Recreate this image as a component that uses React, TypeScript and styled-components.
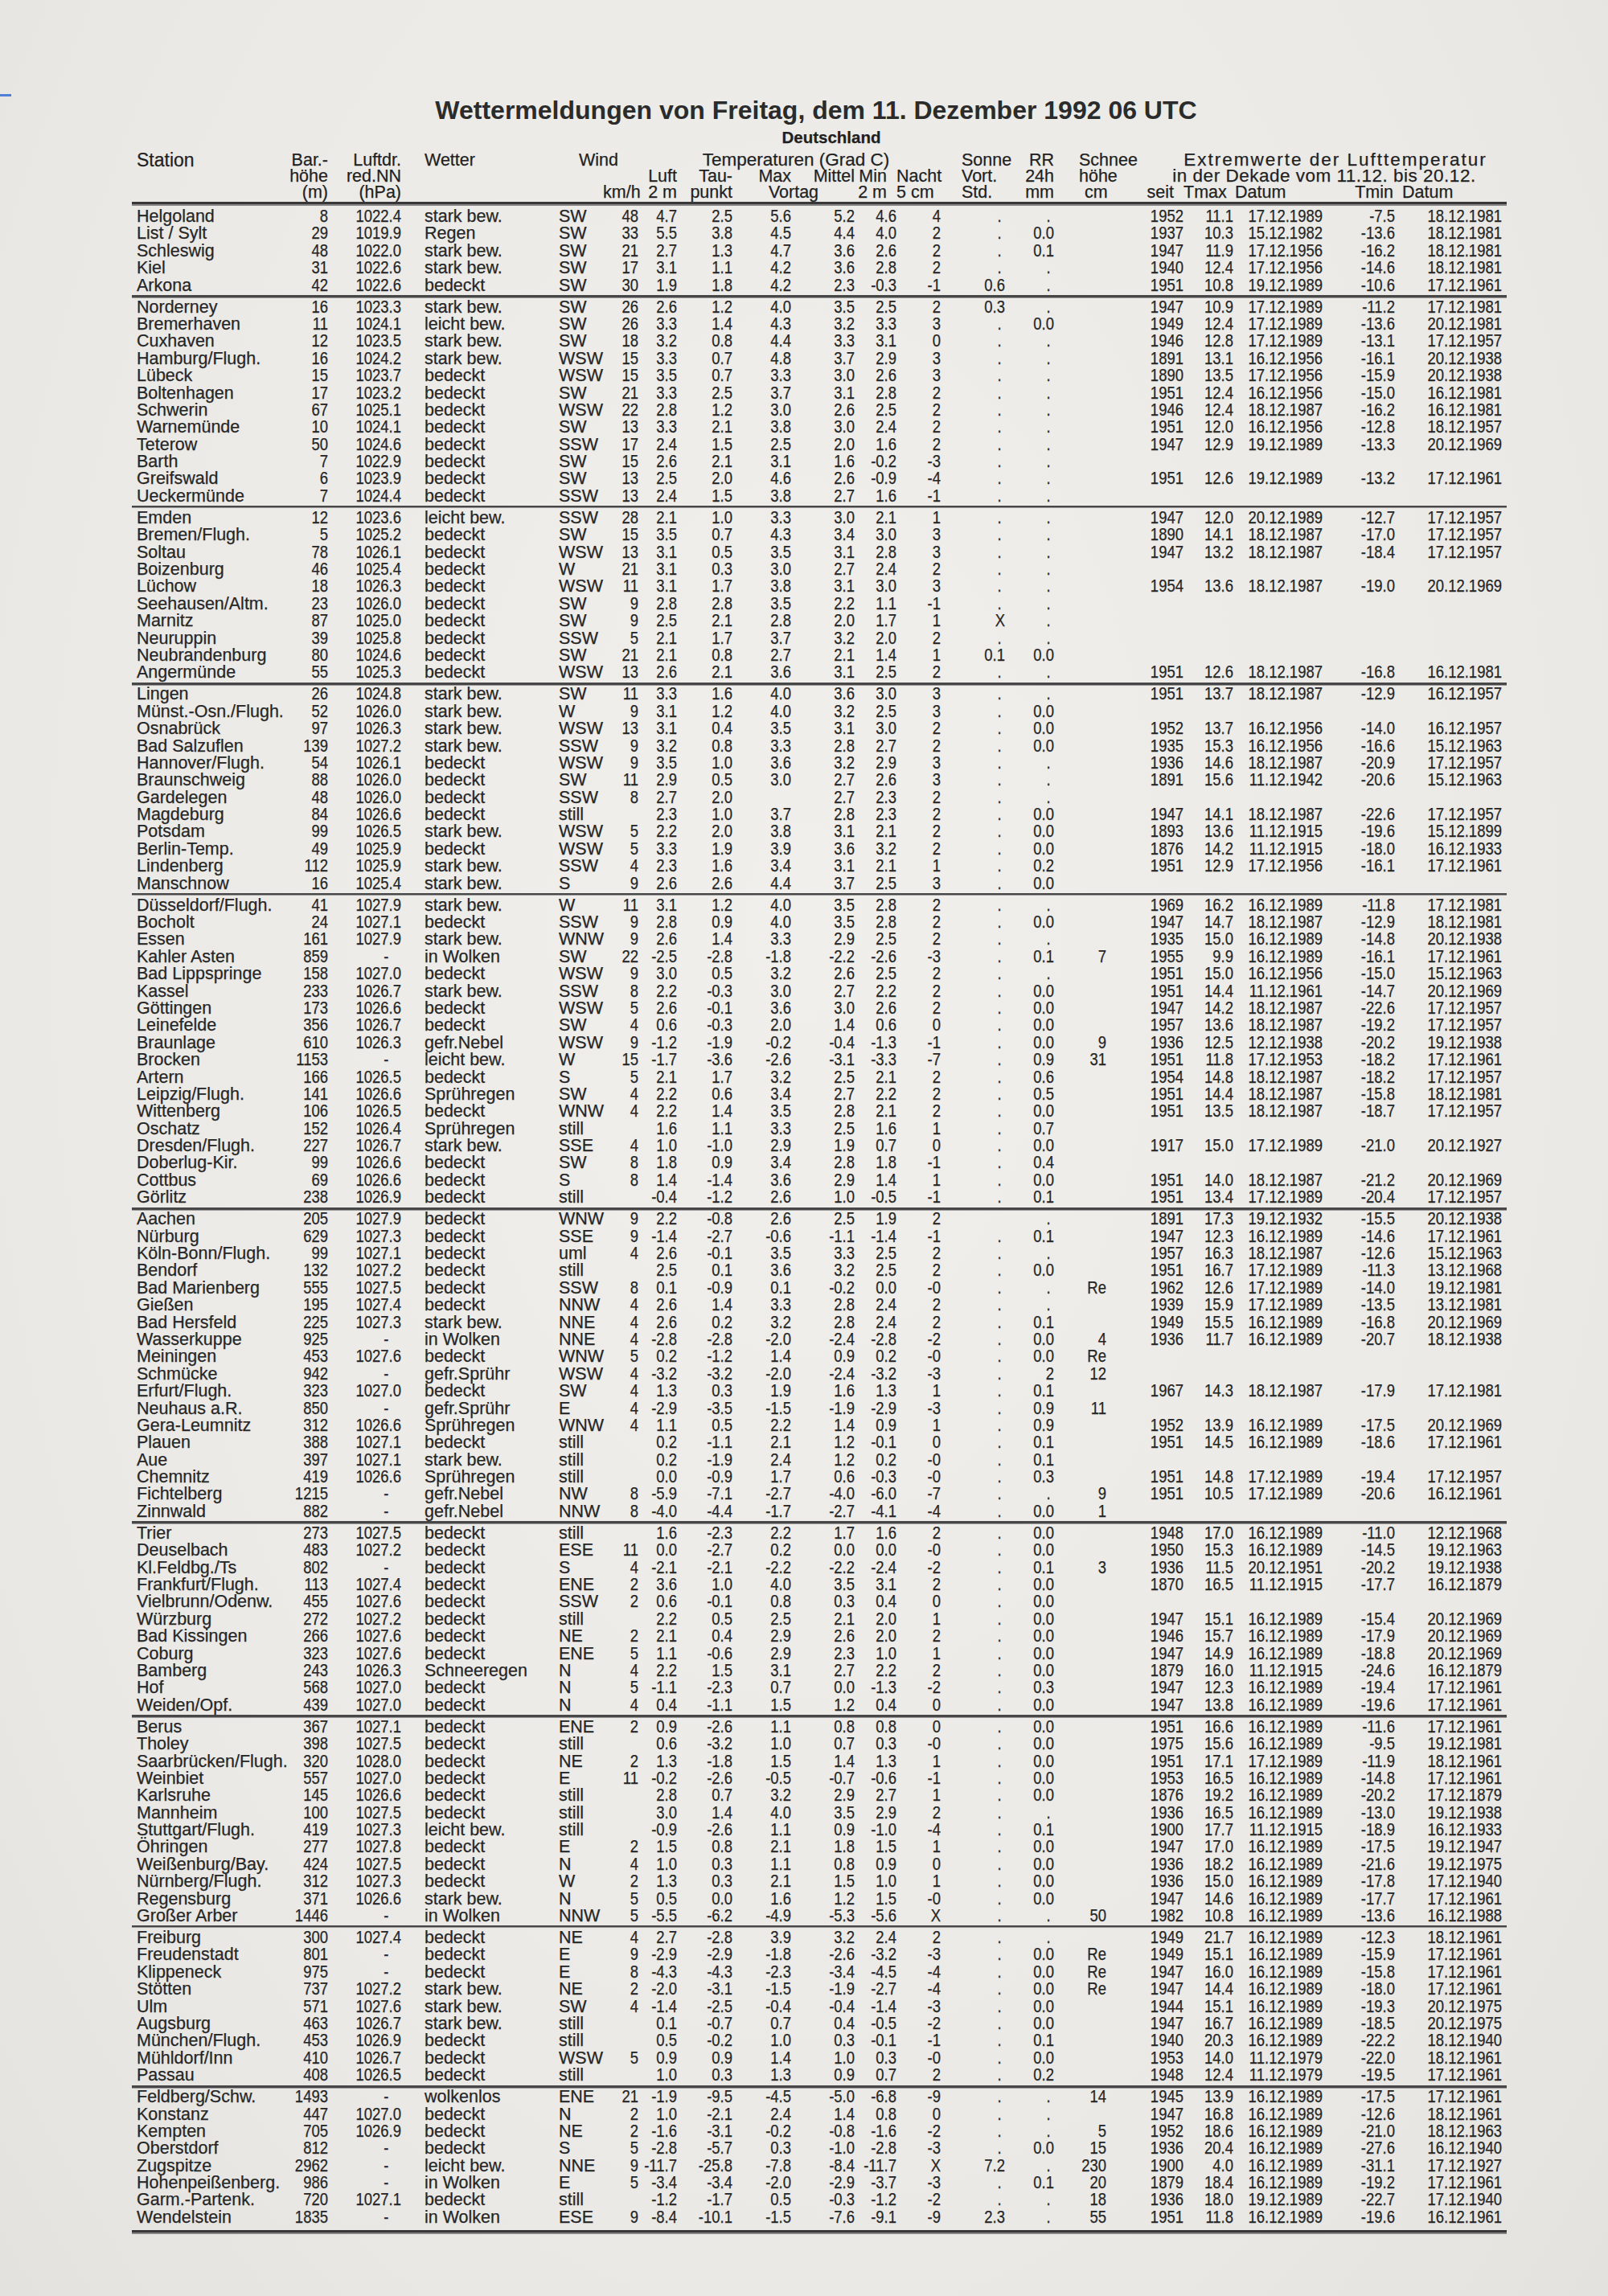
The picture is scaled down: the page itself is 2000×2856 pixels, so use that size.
import React from "react";
import styled, { createGlobalStyle } from "styled-components";

// column widths in px, from "Station" to the Tmin date
const COLS = [190, 48, 91, 196, 55, 44, 48, 69, 73, 79, 52, 55, 80, 61, 65, 96, 62, 111, 90, 133];
const TEMPLATE = COLS.map((w) => `${w}px`).join(" ");

type Align = "left" | "right" | "center";

// station, weather and wind direction are words; everything else is a figure
const TEXT_COLS = [0, 3, 4];

const RAW = `
Helgoland|8|1022.4|stark bew.|SW|48|4.7|2.5|5.6|5.2|4.6|4|.|.||1952|11.1|17.12.1989|-7.5|18.12.1981
List / Sylt|29|1019.9|Regen|SW|33|5.5|3.8|4.5|4.4|4.0|2|.|0.0||1937|10.3|15.12.1982|-13.6|18.12.1981
Schleswig|48|1022.0|stark bew.|SW|21|2.7|1.3|4.7|3.6|2.6|2|.|0.1||1947|11.9|17.12.1956|-16.2|18.12.1981
Kiel|31|1022.6|stark bew.|SW|17|3.1|1.1|4.2|3.6|2.8|2|.|.||1940|12.4|17.12.1956|-14.6|18.12.1981
Arkona|42|1022.6|bedeckt|SW|30|1.9|1.8|4.2|2.3|-0.3|-1|0.6|.||1951|10.8|19.12.1989|-10.6|17.12.1961
---
Norderney|16|1023.3|stark bew.|SW|26|2.6|1.2|4.0|3.5|2.5|2|0.3|.||1947|10.9|17.12.1989|-11.2|17.12.1981
Bremerhaven|11|1024.1|leicht bew.|SW|26|3.3|1.4|4.3|3.2|3.3|3|.|0.0||1949|12.4|17.12.1989|-13.6|20.12.1981
Cuxhaven|12|1023.5|stark bew.|SW|18|3.2|0.8|4.4|3.3|3.1|0|.|.||1946|12.8|17.12.1989|-13.1|17.12.1957
Hamburg/Flugh.|16|1024.2|stark bew.|WSW|15|3.3|0.7|4.8|3.7|2.9|3|.|.||1891|13.1|16.12.1956|-16.1|20.12.1938
Lübeck|15|1023.7|bedeckt|WSW|15|3.5|0.7|3.3|3.0|2.6|3|.|.||1890|13.5|17.12.1956|-15.9|20.12.1938
Boltenhagen|17|1023.2|bedeckt|SW|21|3.3|2.5|3.7|3.1|2.8|2|.|.||1951|12.4|16.12.1956|-15.0|16.12.1981
Schwerin|67|1025.1|bedeckt|WSW|22|2.8|1.2|3.0|2.6|2.5|2|.|.||1946|12.4|18.12.1987|-16.2|16.12.1981
Warnemünde|10|1024.1|bedeckt|SW|13|3.3|2.1|3.8|3.0|2.4|2|.|.||1951|12.0|16.12.1956|-12.8|18.12.1957
Teterow|50|1024.6|bedeckt|SSW|17|2.4|1.5|2.5|2.0|1.6|2|.|.||1947|12.9|19.12.1989|-13.3|20.12.1969
Barth|7|1022.9|bedeckt|SW|15|2.6|2.1|3.1|1.6|-0.2|-3|.|.
Greifswald|6|1023.9|bedeckt|SW|13|2.5|2.0|4.6|2.6|-0.9|-4|.|.||1951|12.6|19.12.1989|-13.2|17.12.1961
Ueckermünde|7|1024.4|bedeckt|SSW|13|2.4|1.5|3.8|2.7|1.6|-1|.|.
---
Emden|12|1023.6|leicht bew.|SSW|28|2.1|1.0|3.3|3.0|2.1|1|.|.||1947|12.0|20.12.1989|-12.7|17.12.1957
Bremen/Flugh.|5|1025.2|bedeckt|SW|15|3.5|0.7|4.3|3.4|3.0|3|.|.||1890|14.1|18.12.1987|-17.0|17.12.1957
Soltau|78|1026.1|bedeckt|WSW|13|3.1|0.5|3.5|3.1|2.8|3|.|.||1947|13.2|18.12.1987|-18.4|17.12.1957
Boizenburg|46|1025.4|bedeckt|W|21|3.1|0.3|3.0|2.7|2.4|2|.|.
Lüchow|18|1026.3|bedeckt|WSW|11|3.1|1.7|3.8|3.1|3.0|3|.|.||1954|13.6|18.12.1987|-19.0|20.12.1969
Seehausen/Altm.|23|1026.0|bedeckt|SW|9|2.8|2.8|3.5|2.2|1.1|-1|.|.
Marnitz|87|1025.0|bedeckt|SW|9|2.5|2.1|2.8|2.0|1.7|1|X|.
Neuruppin|39|1025.8|bedeckt|SSW|5|2.1|1.7|3.7|3.2|2.0|2|.|.
Neubrandenburg|80|1024.6|bedeckt|SW|21|2.1|0.8|2.7|2.1|1.4|1|0.1|0.0
Angermünde|55|1025.3|bedeckt|WSW|13|2.6|2.1|3.6|3.1|2.5|2|.|.||1951|12.6|18.12.1987|-16.8|16.12.1981
---
Lingen|26|1024.8|stark bew.|SW|11|3.3|1.6|4.0|3.6|3.0|3|.|.||1951|13.7|18.12.1987|-12.9|16.12.1957
Münst.-Osn./Flugh.|52|1026.0|stark bew.|W|9|3.1|1.2|4.0|3.2|2.5|3|.|0.0
Osnabrück|97|1026.3|stark bew.|WSW|13|3.1|0.4|3.5|3.1|3.0|2|.|0.0||1952|13.7|16.12.1956|-14.0|16.12.1957
Bad Salzuflen|139|1027.2|stark bew.|SSW|9|3.2|0.8|3.3|2.8|2.7|2|.|0.0||1935|15.3|16.12.1956|-16.6|15.12.1963
Hannover/Flugh.|54|1026.1|bedeckt|WSW|9|3.5|1.0|3.6|3.2|2.9|3|.|.||1936|14.6|18.12.1987|-20.9|17.12.1957
Braunschweig|88|1026.0|bedeckt|SW|11|2.9|0.5|3.0|2.7|2.6|3|.|.||1891|15.6|11.12.1942|-20.6|15.12.1963
Gardelegen|48|1026.0|bedeckt|SSW|8|2.7|2.0||2.7|2.3|2|.|.
Magdeburg|84|1026.6|bedeckt|still||2.3|1.0|3.7|2.8|2.3|2|.|0.0||1947|14.1|18.12.1987|-22.6|17.12.1957
Potsdam|99|1026.5|stark bew.|WSW|5|2.2|2.0|3.8|3.1|2.1|2|.|0.0||1893|13.6|11.12.1915|-19.6|15.12.1899
Berlin-Temp.|49|1025.9|bedeckt|WSW|5|3.3|1.9|3.9|3.6|3.2|2|.|0.0||1876|14.2|11.12.1915|-18.0|16.12.1933
Lindenberg|112|1025.9|stark bew.|SSW|4|2.3|1.6|3.4|3.1|2.1|1|.|0.2||1951|12.9|17.12.1956|-16.1|17.12.1961
Manschnow|16|1025.4|stark bew.|S|9|2.6|2.6|4.4|3.7|2.5|3|.|0.0
---
Düsseldorf/Flugh.|41|1027.9|stark bew.|W|11|3.1|1.2|4.0|3.5|2.8|2|.|.||1969|16.2|16.12.1989|-11.8|17.12.1981
Bocholt|24|1027.1|bedeckt|SSW|9|2.8|0.9|4.0|3.5|2.8|2|.|0.0||1947|14.7|18.12.1987|-12.9|18.12.1981
Essen|161|1027.9|stark bew.|WNW|9|2.6|1.4|3.3|2.9|2.5|2|.|.||1935|15.0|16.12.1989|-14.8|20.12.1938
Kahler Asten|859|-|in Wolken|SW|22|-2.5|-2.8|-1.8|-2.2|-2.6|-3|.|0.1|7|1955|9.9|16.12.1989|-16.1|17.12.1961
Bad Lippspringe|158|1027.0|bedeckt|WSW|9|3.0|0.5|3.2|2.6|2.5|2|.|.||1951|15.0|16.12.1956|-15.0|15.12.1963
Kassel|233|1026.7|stark bew.|SSW|8|2.2|-0.3|3.0|2.7|2.2|2|.|0.0||1951|14.4|11.12.1961|-14.7|20.12.1969
Göttingen|173|1026.6|bedeckt|WSW|5|2.6|-0.1|3.6|3.0|2.6|2|.|0.0||1947|14.2|18.12.1987|-22.6|17.12.1957
Leinefelde|356|1026.7|bedeckt|SW|4|0.6|-0.3|2.0|1.4|0.6|0|.|0.0||1957|13.6|18.12.1987|-19.2|17.12.1957
Braunlage|610|1026.3|gefr.Nebel|WSW|9|-1.2|-1.9|-0.2|-0.4|-1.3|-1|.|0.0|9|1936|12.5|12.12.1938|-20.2|19.12.1938
Brocken|1153|-|leicht bew.|W|15|-1.7|-3.6|-2.6|-3.1|-3.3|-7|.|0.9|31|1951|11.8|17.12.1953|-18.2|17.12.1961
Artern|166|1026.5|bedeckt|S|5|2.1|1.7|3.2|2.5|2.1|2|.|0.6||1954|14.8|18.12.1987|-18.2|17.12.1957
Leipzig/Flugh.|141|1026.6|Sprühregen|SW|4|2.2|0.6|3.4|2.7|2.2|2|.|0.5||1951|14.4|18.12.1987|-15.8|18.12.1981
Wittenberg|106|1026.5|bedeckt|WNW|4|2.2|1.4|3.5|2.8|2.1|2|.|0.0||1951|13.5|18.12.1987|-18.7|17.12.1957
Oschatz|152|1026.4|Sprühregen|still||1.6|1.1|3.3|2.5|1.6|1|.|0.7
Dresden/Flugh.|227|1026.7|stark bew.|SSE|4|1.0|-1.0|2.9|1.9|0.7|0|.|0.0||1917|15.0|17.12.1989|-21.0|20.12.1927
Doberlug-Kir.|99|1026.6|bedeckt|SW|8|1.8|0.9|3.4|2.8|1.8|-1|.|0.4
Cottbus|69|1026.6|bedeckt|S|8|1.4|-1.4|3.6|2.9|1.4|1|.|0.0||1951|14.0|18.12.1987|-21.2|20.12.1969
Görlitz|238|1026.9|bedeckt|still||-0.4|-1.2|2.6|1.0|-0.5|-1|.|0.1||1951|13.4|17.12.1989|-20.4|17.12.1957
---
Aachen|205|1027.9|bedeckt|WNW|9|2.2|-0.8|2.6|2.5|1.9|2||.||1891|17.3|19.12.1932|-15.5|20.12.1938
Nürburg|629|1027.3|bedeckt|SSE|9|-1.4|-2.7|-0.6|-1.1|-1.4|-1|.|0.1||1947|12.3|16.12.1989|-14.6|17.12.1961
Köln-Bonn/Flugh.|99|1027.1|bedeckt|uml|4|2.6|-0.1|3.5|3.3|2.5|2|.|.||1957|16.3|18.12.1987|-12.6|15.12.1963
Bendorf|132|1027.2|bedeckt|still||2.5|0.1|3.6|3.2|2.5|2|.|0.0||1951|16.7|17.12.1989|-11.3|13.12.1968
Bad Marienberg|555|1027.5|bedeckt|SSW|8|0.1|-0.9|0.1|-0.2|0.0|-0|.|.|Re|1962|12.6|17.12.1989|-14.0|19.12.1981
Gießen|195|1027.4|bedeckt|NNW|4|2.6|1.4|3.3|2.8|2.4|2|.|.||1939|15.9|17.12.1989|-13.5|13.12.1981
Bad Hersfeld|225|1027.3|stark bew.|NNE|4|2.6|0.2|3.2|2.8|2.4|2|.|0.1||1949|15.5|16.12.1989|-16.8|20.12.1969
Wasserkuppe|925|-|in Wolken|NNE|4|-2.8|-2.8|-2.0|-2.4|-2.8|-2|.|0.0|4|1936|11.7|16.12.1989|-20.7|18.12.1938
Meiningen|453|1027.6|bedeckt|WNW|5|0.2|-1.2|1.4|0.9|0.2|-0|.|0.0|Re
Schmücke|942|-|gefr.Sprühr|WSW|4|-3.2|-3.2|-2.0|-2.4|-3.2|-3|.|2|12
Erfurt/Flugh.|323|1027.0|bedeckt|SW|4|1.3|0.3|1.9|1.6|1.3|1|.|0.1||1967|14.3|18.12.1987|-17.9|17.12.1981
Neuhaus a.R.|850|-|gefr.Sprühr|E|4|-2.9|-3.5|-1.5|-1.9|-2.9|-3|.|0.9|11
Gera-Leumnitz|312|1026.6|Sprühregen|WNW|4|1.1|0.5|2.2|1.4|0.9|1|.|0.9||1952|13.9|16.12.1989|-17.5|20.12.1969
Plauen|388|1027.1|bedeckt|still||0.2|-1.1|2.1|1.2|-0.1|0|.|0.1||1951|14.5|16.12.1989|-18.6|17.12.1961
Aue|397|1027.1|stark bew.|still||0.2|-1.9|2.4|1.2|0.2|-0|.|0.1
Chemnitz|419|1026.6|Sprühregen|still||0.0|-0.9|1.7|0.6|-0.3|-0|.|0.3||1951|14.8|17.12.1989|-19.4|17.12.1957
Fichtelberg|1215|-|gefr.Nebel|NW|8|-5.9|-7.1|-2.7|-4.0|-6.0|-7|.|.|9|1951|10.5|17.12.1989|-20.6|16.12.1961
Zinnwald|882|-|gefr.Nebel|NNW|8|-4.0|-4.4|-1.7|-2.7|-4.1|-4|.|0.0|1
---
Trier|273|1027.5|bedeckt|still||1.6|-2.3|2.2|1.7|1.6|2|.|0.0||1948|17.0|16.12.1989|-11.0|12.12.1968
Deuselbach|483|1027.2|bedeckt|ESE|11|0.0|-2.7|0.2|0.0|0.0|-0|.|0.0||1950|15.3|16.12.1989|-14.5|19.12.1963
Kl.Feldbg./Ts|802|-|bedeckt|S|4|-2.1|-2.1|-2.2|-2.2|-2.4|-2|.|0.1|3|1936|11.5|20.12.1951|-20.2|19.12.1938
Frankfurt/Flugh.|113|1027.4|bedeckt|ENE|2|3.6|1.0|4.0|3.5|3.1|2|.|0.0||1870|16.5|11.12.1915|-17.7|16.12.1879
Vielbrunn/Odenw.|455|1027.6|bedeckt|SSW|2|0.6|-0.1|0.8|0.3|0.4|0|.|0.0
Würzburg|272|1027.2|bedeckt|still||2.2|0.5|2.5|2.1|2.0|1|.|0.0||1947|15.1|16.12.1989|-15.4|20.12.1969
Bad Kissingen|266|1027.6|bedeckt|NE|2|2.1|0.4|2.9|2.6|2.0|2|.|0.0||1946|15.7|16.12.1989|-17.9|20.12.1969
Coburg|323|1027.6|bedeckt|ENE|5|1.1|-0.6|2.9|2.3|1.0|1|.|0.0||1947|14.9|16.12.1989|-18.8|20.12.1969
Bamberg|243|1026.3|Schneeregen|N|4|2.2|1.5|3.1|2.7|2.2|2|.|0.0||1879|16.0|11.12.1915|-24.6|16.12.1879
Hof|568|1027.0|bedeckt|N|5|-1.1|-2.3|0.7|0.0|-1.3|-2|.|0.3||1947|12.3|16.12.1989|-19.4|17.12.1961
Weiden/Opf.|439|1027.0|bedeckt|N|4|0.4|-1.1|1.5|1.2|0.4|0|.|0.0||1947|13.8|16.12.1989|-19.6|17.12.1961
---
Berus|367|1027.1|bedeckt|ENE|2|0.9|-2.6|1.1|0.8|0.8|0|.|0.0||1951|16.6|16.12.1989|-11.6|17.12.1961
Tholey|398|1027.5|bedeckt|still||0.6|-3.2|1.0|0.7|0.3|-0|.|0.0||1975|15.6|16.12.1989|-9.5|19.12.1981
Saarbrücken/Flugh.|320|1028.0|bedeckt|NE|2|1.3|-1.8|1.5|1.4|1.3|1|.|0.0||1951|17.1|17.12.1989|-11.9|18.12.1961
Weinbiet|557|1027.0|bedeckt|E|11|-0.2|-2.6|-0.5|-0.7|-0.6|-1|.|0.0||1953|16.5|16.12.1989|-14.8|17.12.1961
Karlsruhe|145|1026.6|bedeckt|still||2.8|0.7|3.2|2.9|2.7|1|.|0.0||1876|19.2|16.12.1989|-20.2|17.12.1879
Mannheim|100|1027.5|bedeckt|still||3.0|1.4|4.0|3.5|2.9|2|.|.||1936|16.5|16.12.1989|-13.0|19.12.1938
Stuttgart/Flugh.|419|1027.3|leicht bew.|still||-0.9|-2.6|1.1|0.9|-1.0|-4|.|0.1||1900|17.7|11.12.1915|-18.9|16.12.1933
Öhringen|277|1027.8|bedeckt|E|2|1.5|0.8|2.1|1.8|1.5|1|.|0.0||1947|17.0|16.12.1989|-17.5|19.12.1947
Weißenburg/Bay.|424|1027.5|bedeckt|N|4|1.0|0.3|1.1|0.8|0.9|0|.|0.0||1936|18.2|16.12.1989|-21.6|19.12.1975
Nürnberg/Flugh.|312|1027.3|bedeckt|W|2|1.3|0.3|2.1|1.5|1.0|1|.|0.0||1936|15.0|16.12.1989|-17.8|17.12.1940
Regensburg|371|1026.6|stark bew.|N|5|0.5|0.0|1.6|1.2|1.5|-0|.|0.0||1947|14.6|16.12.1989|-17.7|17.12.1961
Großer Arber|1446|-|in Wolken|NNW|5|-5.5|-6.2|-4.9|-5.3|-5.6|X|.|.|50|1982|10.8|16.12.1989|-13.6|16.12.1988
---
Freiburg|300|1027.4|bedeckt|NE|4|2.7|-2.8|3.9|3.2|2.4|2|.|.||1949|21.7|16.12.1989|-12.3|18.12.1961
Freudenstadt|801|-|bedeckt|E|9|-2.9|-2.9|-1.8|-2.6|-3.2|-3|.|0.0|Re|1949|15.1|16.12.1989|-15.9|17.12.1961
Klippeneck|975|-|bedeckt|E|8|-4.3|-4.3|-2.3|-3.4|-4.5|-4|.|0.0|Re|1947|16.0|16.12.1989|-15.8|17.12.1961
Stötten|737|1027.2|stark bew.|NE|2|-2.0|-3.1|-1.5|-1.9|-2.7|-4|.|0.0|Re|1947|14.4|16.12.1989|-18.0|17.12.1961
Ulm|571|1027.6|stark bew.|SW|4|-1.4|-2.5|-0.4|-0.4|-1.4|-3|.|0.0||1944|15.1|16.12.1989|-19.3|20.12.1975
Augsburg|463|1026.7|stark bew.|still||0.1|-0.7|0.7|0.4|-0.5|-2|.|0.0||1947|16.7|16.12.1989|-18.5|20.12.1975
München/Flugh.|453|1026.9|bedeckt|still||0.5|-0.2|1.0|0.3|-0.1|-1|.|0.1||1940|20.3|16.12.1989|-22.2|18.12.1940
Mühldorf/Inn|410|1026.7|bedeckt|WSW|5|0.9|0.9|1.4|1.0|0.3|-0|.|0.0||1953|14.0|11.12.1979|-22.0|18.12.1961
Passau|408|1026.5|bedeckt|still||1.0|0.3|1.3|0.9|0.7|2|.|0.2||1948|12.4|11.12.1979|-19.5|17.12.1961
---
Feldberg/Schw.|1493|-|wolkenlos|ENE|21|-1.9|-9.5|-4.5|-5.0|-6.8|-9|.|.|14|1945|13.9|16.12.1989|-17.5|17.12.1961
Konstanz|447|1027.0|bedeckt|N|2|1.0|-2.1|2.4|1.4|0.8|0|.|.||1947|16.8|16.12.1989|-12.6|18.12.1961
Kempten|705|1026.9|bedeckt|NE|2|-1.6|-3.1|-0.2|-0.8|-1.6|-2|.|.|5|1952|18.6|16.12.1989|-21.0|18.12.1963
Oberstdorf|812|-|bedeckt|S|5|-2.8|-5.7|0.3|-1.0|-2.8|-3|.|0.0|15|1936|20.4|16.12.1989|-27.6|16.12.1940
Zugspitze|2962|-|leicht bew.|NNE|9|-11.7|-25.8|-7.8|-8.4|-11.7|X|7.2|.|230|1900|4.0|16.12.1989|-31.1|17.12.1927
Hohenpeißenberg.|986|-|in Wolken|E|5|-3.4|-3.4|-2.0|-2.9|-3.7|-3|.|0.1|20|1879|18.4|16.12.1989|-19.2|17.12.1961
Garm.-Partenk.|720|1027.1|bedeckt|still||-1.2|-1.7|0.5|-0.3|-1.2|-2|.|.|18|1936|18.0|19.12.1989|-22.7|17.12.1940
Wendelstein|1835|-|in Wolken|ESE|9|-8.4|-10.1|-1.5|-7.6|-9.1|-9|2.3|.|55|1951|11.8|16.12.1989|-19.6|16.12.1961
`;

const groups: string[][][] = RAW.trim()
  .split("---")
  .map((block) =>
    block
      .trim()
      .split("\n")
      .map((line) => {
        const f = line.split("|");
        while (f.length < COLS.length) f.push("");
        return f;
      })
  );

const GlobalStyle = createGlobalStyle`
  html, body {
    margin: 0;
    padding: 0;
    background: #ecebe8;
  }
  body {
    font-family: "Liberation Sans", Arial, sans-serif;
    color: #262626;
  }
`;

const Page = styled.div`
  position: relative;
  width: 2000px;
  height: 2856px;
  padding-top: 117px;
  box-sizing: border-box;
  overflow: hidden;
  background: radial-gradient(ellipse at 50% 40%, #f0efec 0%, #eae9e6 70%, #e3e2df 100%);
`;

const ScanMark = styled.div`
  position: absolute;
  left: 0;
  top: 117px;
  width: 14px;
  height: 3px;
  background: #4f7fd6;
`;

const Title = styled.h1`
  margin: 0;
  padding-left: 30px;
  height: 40px;
  line-height: 40px;
  text-align: center;
  font-size: 32px;
  font-weight: 700;
  color: #2b2b2b;
`;

const Table = styled.div`
  margin: 4px 0 0 170px;
  width: 1698px;
  font-size: 21.5px;
  -webkit-text-stroke: 0.25px #262626;
`;

const HeaderGrid = styled.div`
  display: grid;
  grid-template-columns: ${TEMPLATE};
  grid-template-rows: 28px 20px 20px 20px;
  line-height: 20px;
  font-size: 21.5px;
  color: #1f1f1f;
`;

const HeadCell = styled.span<{
  $col: number;
  $span?: number;
  $row: number;
  $align?: Align;
  $padL?: number;
  $padR?: number;
  $size?: number;
  $spacing?: number;
  $bold?: boolean;
}>`
  grid-column: ${(p) => p.$col} / span ${(p) => p.$span ?? 1};
  grid-row: ${(p) => p.$row};
  text-align: ${(p) => p.$align ?? "right"};
  padding-left: ${(p) => p.$padL ?? 0}px;
  padding-right: ${(p) => p.$padR ?? 0}px;
  font-weight: ${(p) => (p.$bold ? 700 : 400)};
  font-size: ${(p) => (p.$size ? `${p.$size}px` : "inherit")};
  letter-spacing: ${(p) => p.$spacing ?? 0}px;
  white-space: nowrap;
`;

const Rule = styled.div<{ $gap: number }>`
  margin: ${(p) => p.$gap}px -6px 2px;
  height: 6px;
  background: linear-gradient(#383838 0 3px, #858585 3px 5px, transparent 5px);
`;

const GroupLine = styled.div`
  margin: 0 -6px;
  height: 5.6px;
  background: linear-gradient(transparent 0 1px, #474747 1px 3.5px, #9a9a9a 3.5px 4.5px, transparent 4.5px);
`;

const Row = styled.div`
  display: grid;
  grid-template-columns: ${TEMPLATE};
  height: 21.4px;
  line-height: 21.4px;
`;

// figures in the print are set narrower than the words, so they get squeezed
const Cell = styled.span<{ $align: Align; $num: boolean; $padL?: number; $padR?: number }>`
  text-align: ${(p) => p.$align};
  padding-left: ${(p) => p.$padL ?? 0}px;
  padding-right: ${(p) => p.$padR ?? 0}px;
  white-space: nowrap;
  transform: ${(p) => (p.$num ? "scaleX(0.86)" : "none")};
  transform-origin: right center;
`;

function DataRow({ fields }: { fields: string[] }) {
  return (
    <Row>
      {fields.map((v, i) => {
        const isText = TEXT_COLS.includes(i);
        let padR = 0;
        if (v === ".") padR = 5;
        if (i === 2 && v === "-") padR = 18;
        return (
          <Cell
            key={i}
            $align={isText ? "left" : "right"}
            $num={!isText}
            $padL={i === 3 ? 29 : 0}
            $padR={padR}
          >
            {v}
          </Cell>
        );
      })}
    </Row>
  );
}

function Header() {
  return (
    <HeaderGrid>
      <HeadCell $row={1} $col={7} $span={7} $align="center" $padL={24} $size={20.5} $bold>
        Deutschland
      </HeadCell>

      <HeadCell $row={2} $col={1} $align="left" $size={23}>Station</HeadCell>
      <HeadCell $row={2} $col={2}>Bar.-</HeadCell>
      <HeadCell $row={2} $col={3} $padR={-6}>Luftdr.</HeadCell>
      <HeadCell $row={2} $col={4} $align="left" $padL={29}>Wetter</HeadCell>
      <HeadCell $row={2} $col={5} $span={2} $align="center">Wind</HeadCell>
      <HeadCell $row={2} $col={7} $span={6} $align="center" $padL={16} $size={22.5}>
        Temperaturen (Grad C)
      </HeadCell>
      <HeadCell $row={2} $col={13} $align="left" $padL={26}>Sonne</HeadCell>
      <HeadCell $row={2} $col={14}>RR</HeadCell>
      <HeadCell $row={2} $col={15} $align="left" $padL={31}>Schnee</HeadCell>
      <HeadCell $row={2} $col={16} $span={5} $align="center" $padL={78} $size={22.5} $spacing={2}>
        Extremwerte der Lufttemperatur
      </HeadCell>

      <HeadCell $row={3} $col={2}>höhe</HeadCell>
      <HeadCell $row={3} $col={3}>red.NN</HeadCell>
      <HeadCell $row={3} $col={7} $padR={-6}>Luft</HeadCell>
      <HeadCell $row={3} $col={8}>Tau-</HeadCell>
      <HeadCell $row={3} $col={9}>Max</HeadCell>
      <HeadCell $row={3} $col={10}>Mittel</HeadCell>
      <HeadCell $row={3} $col={11} $padR={12}>Min</HeadCell>
      <HeadCell $row={3} $col={12} $padR={9}>Nacht</HeadCell>
      <HeadCell $row={3} $col={13} $align="left" $padL={26}>Vort.</HeadCell>
      <HeadCell $row={3} $col={14}>24h</HeadCell>
      <HeadCell $row={3} $col={15} $align="left" $padL={31}>höhe</HeadCell>
      <HeadCell $row={3} $col={16} $span={5} $align="center" $padL={50} $size={22.5} $spacing={0.5}>
        in der Dekade vom 11.12. bis 20.12.
      </HeadCell>

      <HeadCell $row={4} $col={2}>(m)</HeadCell>
      <HeadCell $row={4} $col={3}>(hPa)</HeadCell>
      <HeadCell $row={4} $col={6} $padR={4}>km/h</HeadCell>
      <HeadCell $row={4} $col={7} $padR={-6}>2 m</HeadCell>
      <HeadCell $row={4} $col={8}>punkt</HeadCell>
      <HeadCell $row={4} $col={9} $span={2} $align="center">Vortag</HeadCell>
      <HeadCell $row={4} $col={11} $padR={12}>2 m</HeadCell>
      <HeadCell $row={4} $col={12} $padR={9}>5 cm</HeadCell>
      <HeadCell $row={4} $col={13} $align="left" $padL={26}>Std.</HeadCell>
      <HeadCell $row={4} $col={14}>mm</HeadCell>
      <HeadCell $row={4} $col={15} $align="left" $padL={38}>cm</HeadCell>
      <HeadCell $row={4} $col={16} $padR={12}>seit</HeadCell>
      <HeadCell $row={4} $col={17} $padR={12}>Tmax</HeadCell>
      <HeadCell $row={4} $col={18} $align="left" $padL={2}>Datum</HeadCell>
      <HeadCell $row={4} $col={19} $padR={2}>Tmin</HeadCell>
      <HeadCell $row={4} $col={20} $align="left" $padL={9}>Datum</HeadCell>
    </HeaderGrid>
  );
}

export default function App() {
  return (
    <>
      <GlobalStyle />
      <Page>
        <ScanMark />
        <Title>Wettermeldungen von Freitag, dem 11. Dezember 1992 06 UTC</Title>
        <Table>
          <Header />
          <Rule $gap={2} />
          {groups.map((g, gi) => (
            <React.Fragment key={gi}>
              {gi > 0 && <GroupLine />}
              {g.map((fields) => (
                <DataRow key={fields[0]} fields={fields} />
              ))}
            </React.Fragment>
          ))}
          <Rule $gap={5} />
        </Table>
      </Page>
    </>
  );
}
